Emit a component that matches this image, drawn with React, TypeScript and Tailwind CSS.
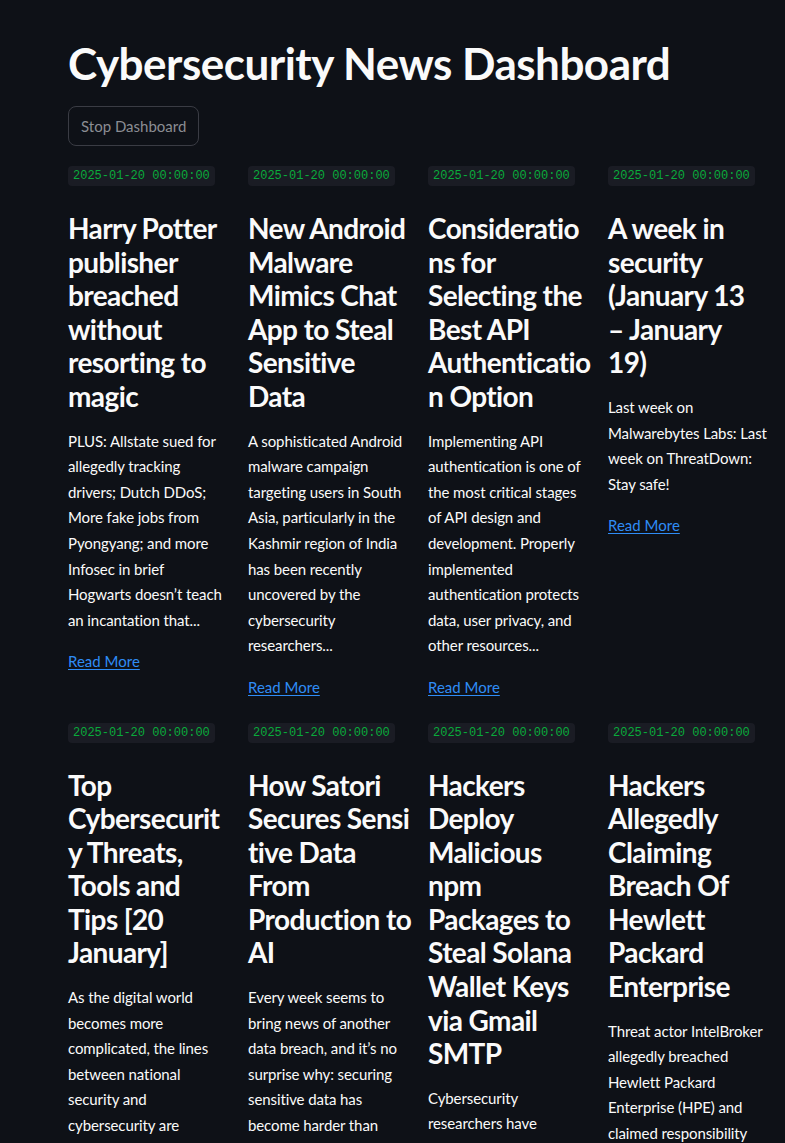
import React from "react";

type Article = {
  title: string[];
  body: string[];
  link?: boolean;
};

const DATE = "2025-01-20 00:00:00";

const ROWS: Article[][] = [
  [
    {
      title: ["Harry Potter", "publisher", "breached", "without", "resorting to", "magic"],
      body: [
        "PLUS: Allstate sued for",
        "allegedly tracking",
        "drivers; Dutch DDoS;",
        "More fake jobs from",
        "Pyongyang; and more",
        "Infosec in brief",
        "Hogwarts doesn’t teach",
        "an incantation that...",
      ],
      link: true,
    },
    {
      title: ["New Android", "Malware", "Mimics Chat", "App to Steal", "Sensitive", "Data"],
      body: [
        "A sophisticated Android",
        "malware campaign",
        "targeting users in South",
        "Asia, particularly in the",
        "Kashmir region of India",
        "has been recently",
        "uncovered by the",
        "cybersecurity",
        "researchers...",
      ],
      link: true,
    },
    {
      title: ["Consideratio", "ns for", "Selecting the", "Best API", "Authenticatio", "n Option"],
      body: [
        "Implementing API",
        "authentication is one of",
        "the most critical stages",
        "of API design and",
        "development. Properly",
        "implemented",
        "authentication protects",
        "data, user privacy, and",
        "other resources...",
      ],
      link: true,
    },
    {
      title: ["A week in", "security", "(January 13", "– January", "19)"],
      body: ["Last week on", "Malwarebytes Labs: Last", "week on ThreatDown:", "Stay safe!"],
      link: true,
    },
  ],
  [
    {
      title: ["Top", "Cybersecurit", "y Threats,", "Tools and", "Tips [20", "January]"],
      body: [
        "As the digital world",
        "becomes more",
        "complicated, the lines",
        "between national",
        "security and",
        "cybersecurity are",
        "blurring faster than...",
      ],
      link: true,
    },
    {
      title: ["How Satori", "Secures Sensi", "tive Data", "From", "Production to", "AI"],
      body: [
        "Every week seems to",
        "bring news of another",
        "data breach, and it’s no",
        "surprise why: securing",
        "sensitive data has",
        "become harder than",
        "ever before...",
      ],
      link: true,
    },
    {
      title: [
        "Hackers",
        "Deploy",
        "Malicious",
        "npm",
        "Packages to",
        "Steal Solana",
        "Wallet Keys",
        "via Gmail",
        "SMTP",
      ],
      body: ["Cybersecurity", "researchers have", "identified three sets of", "malicious packages..."],
      link: true,
    },
    {
      title: ["Hackers", "Allegedly", "Claiming", "Breach Of", "Hewlett", "Packard", "Enterprise"],
      body: [
        "Threat actor IntelBroker",
        "allegedly breached",
        "Hewlett Packard",
        "Enterprise (HPE) and",
        "claimed responsibility",
        "for the leak...",
      ],
      link: true,
    },
  ],
];

function NewsCard({ a }: { a: Article }) {
  return (
    <div className="flex flex-col items-start min-w-0">
      <span className="inline-flex h-5 items-center rounded-[4px] bg-[#1a1c24] px-[5px] font-['Liberation_Mono',monospace] text-[12px] text-[#09ab3b]">
        {DATE}
      </span>
      <h3 className="mt-[26px] text-[28px] font-bold leading-[33.6px] tracking-[-0.6px] text-[#fafafa]">
        {a.title.map((l, i) => (
          <div key={i} className="whitespace-nowrap">
            {l}
          </div>
        ))}
      </h3>
      <p className="mt-[15px] text-[15px] leading-[25.6px] tracking-[-0.1px] text-[#fafafa]">
        {a.body.map((l, i) => (
          <span key={i} className="block whitespace-nowrap">
            {l}
          </span>
        ))}
      </p>
      {a.link && (
        <a href="#" className="mt-4 text-[15px] leading-[25.6px] text-[#2f8cf5] underline underline-offset-2">
          Read More
        </a>
      )}
    </div>
  );
}

export default function App() {
  return (
    <div className="min-h-screen overflow-hidden bg-[#0e1117] font-['Lato','Noto_Sans',sans-serif] text-[#fafafa]">
      <div className="pl-[68px] pt-[37px] w-[772px]">
        <h1 className="text-[44px] font-bold leading-[53px] tracking-[-0.5px]">Cybersecurity News Dashboard</h1>
        <button className="mt-4 h-[40px] rounded-lg border border-[#3a3c44] px-3 text-[15px] text-[#8b8d93]">
          Stop Dashboard
        </button>
        <div className="mt-5 flex flex-col gap-[22px]">
          {ROWS.map((row, r) => (
            <div key={r} className="grid grid-cols-4 gap-4">
              {row.map((a, i) => (
                <NewsCard key={i} a={a} />
              ))}
            </div>
          ))}
        </div>
      </div>
    </div>
  );
}
